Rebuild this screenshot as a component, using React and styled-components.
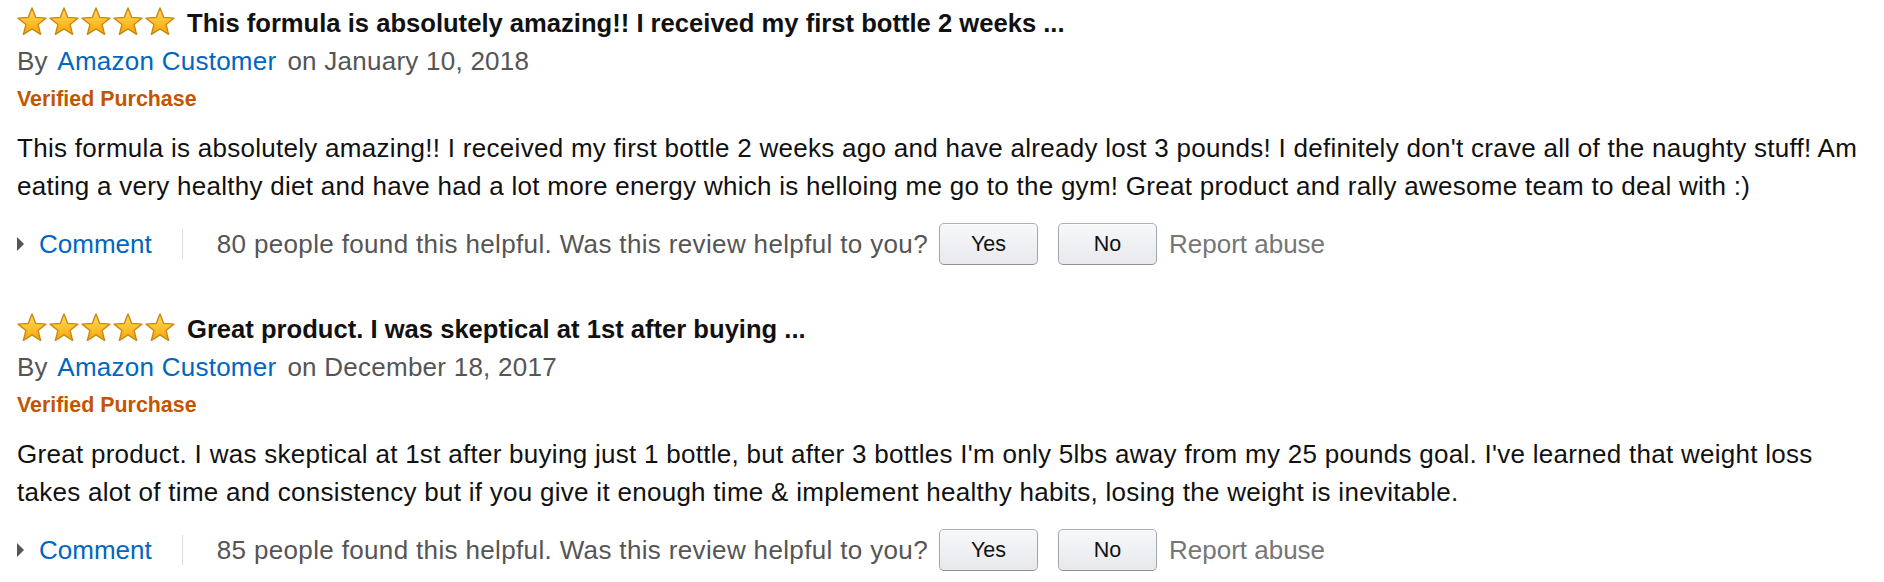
import React from 'react';
import styled, { createGlobalStyle } from 'styled-components';

const GlobalStyle = createGlobalStyle`
  body {
    margin: 0;
    background: #fff;
    font-family: "Liberation Sans", Arial, sans-serif;
    color: #111;
  }
`;

const ReviewList = styled.div`
  display: flex;
  flex-direction: column;
  gap: 45px;
  padding: 4px 17px 0;
`;

const Review = styled.div`
  display: flex;
  flex-direction: column;
`;

const TitleRow = styled.div`
  display: flex;
  align-items: flex-start;
  line-height: 38px;
`;

const Stars = styled.div`
  display: flex;
  gap: 2px;
  margin-top: 3px;
  flex-shrink: 0;
`;

const Title = styled.a`
  margin-left: 12px;
  font-size: 25.6px;
  font-weight: 700;
  color: #111;
  white-space: nowrap;
  text-decoration: none;
`;

const Byline = styled.div`
  font-size: 26px;
  line-height: 38px;
  letter-spacing: 0.25px;
  color: #555;
`;

const Author = styled.a`
  color: #0066c0;
  margin: 0 11px 0 2px;
  text-decoration: none;
`;

const Verified = styled.div`
  font-size: 21.4px;
  font-weight: 700;
  line-height: 38px;
  color: #c45500;
`;

const Body = styled.p`
  margin: 11px 0 0;
  font-size: 26px;
  line-height: 38px;
  letter-spacing: 0.28px;
  color: #111;
`;

const Actions = styled.div`
  display: flex;
  align-items: center;
  height: 42px;
  margin-top: 18px;
  font-size: 26px;
  line-height: 38px;
`;

const Caret = styled.span`
  width: 0;
  height: 0;
  border-top: 7px solid transparent;
  border-bottom: 7px solid transparent;
  border-left: 7px solid #555;
  margin-right: 15px;
`;

const CommentLink = styled.a`
  color: #0066c0;
  text-decoration: none;
`;

const Divider = styled.span`
  width: 1px;
  height: 30px;
  background: #ddd;
  margin: 0 34px 0 30px;
`;

const Helpful = styled.span`
  color: #555;
  letter-spacing: 0.35px;
`;

const VoteButton = styled.button`
  box-sizing: border-box;
  width: 99px;
  height: 42px;
  margin-left: ${(p) => p.$gap}px;
  padding: 0;
  border: 1px solid;
  border-color: #adb1b8 #a2a6ac #8d9096;
  border-radius: 5px;
  background: linear-gradient(to bottom, #f7f8fa, #e7e9ec);
  box-shadow: inset 0 1px 0 rgba(255, 255, 255, 0.6);
  font-family: "Liberation Sans", Arial, sans-serif;
  font-size: 21.5px;
  color: #111;
  cursor: pointer;
`;

const ReportLink = styled.a`
  margin-left: 12px;
  color: #767676;
  text-decoration: none;
`;

function starPoints() {
  const pts = [];
  for (let i = 0; i < 10; i++) {
    const a = ((-90 + i * 36) * Math.PI) / 180;
    const r = i % 2 === 0 ? 14.6 : 6.4;
    pts.push(`${(15 + r * Math.cos(a)).toFixed(2)},${(15.6 + r * Math.sin(a)).toFixed(2)}`);
  }
  return pts.join(' ');
}

const STAR = starPoints();

function Star({ id }) {
  return (
    <svg width="30" height="28" viewBox="0 0 30 28">
      <defs>
        <linearGradient id={id} x1="0" y1="0" x2="0" y2="1">
          <stop offset="0" stopColor="#ffdc5e" />
          <stop offset="0.55" stopColor="#ffbf2a" />
          <stop offset="1" stopColor="#f5a00c" />
        </linearGradient>
      </defs>
      <polygon
        points={STAR}
        fill={`url(#${id})`}
        stroke="#c9870f"
        strokeWidth="1.4"
        strokeLinejoin="round"
      />
    </svg>
  );
}

const reviews = [
  {
    title: 'This formula is absolutely amazing!! I received my first bottle 2 weeks ...',
    date: 'January 10, 2018',
    body:
      "This formula is absolutely amazing!! I received my first bottle 2 weeks ago and have already lost 3 pounds! I definitely don't crave all of the naughty stuff! Am eating a very healthy diet and have had a lot more energy which is helloing me go to the gym! Great product and rally awesome team to deal with :)",
    helpful: 80,
  },
  {
    title: 'Great product. I was skeptical at 1st after buying ...',
    date: 'December 18, 2017',
    body:
      "Great product. I was skeptical at 1st after buying just 1 bottle, but after 3 bottles I'm only 5lbs away from my 25 pounds goal. I've learned that weight loss takes alot of time and consistency but if you give it enough time & implement healthy habits, losing the weight is inevitable.",
    helpful: 85,
  },
];

export default function App() {
  return (
    <>
      <GlobalStyle />
      <ReviewList>
        {reviews.map((r, ri) => (
          <Review key={ri}>
            <TitleRow>
              <Stars>
                {[0, 1, 2, 3, 4].map((s) => (
                  <Star key={s} id={`star-${ri}-${s}`} />
                ))}
              </Stars>
              <Title href="#">{r.title}</Title>
            </TitleRow>
            <Byline>
              By <Author href="#">Amazon Customer</Author>on {r.date}
            </Byline>
            <Verified>Verified Purchase</Verified>
            <Body>{r.body}</Body>
            <Actions>
              <Caret />
              <CommentLink href="#">Comment</CommentLink>
              <Divider />
              <Helpful>{r.helpful} people found this helpful. Was this review helpful to you?</Helpful>
              <VoteButton $gap={11}>Yes</VoteButton>
              <VoteButton $gap={20}>No</VoteButton>
              <ReportLink href="#">Report abuse</ReportLink>
            </Actions>
          </Review>
        ))}
      </ReviewList>
    </>
  );
}
